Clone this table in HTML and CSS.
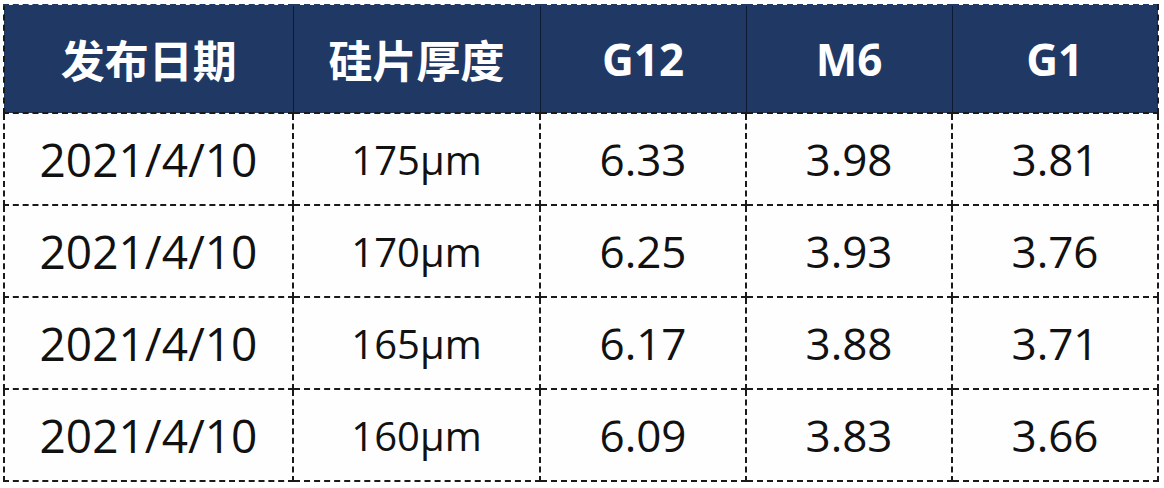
FILE: index.html
```html
<!DOCTYPE html>
<html lang="zh">
<head>
<meta charset="utf-8">
<link rel="stylesheet" href="styles.css">
</head>
<body>
<table class="price">
  <colgroup>
    <col class="c1"><col class="c2"><col class="c3"><col class="c4"><col class="c5">
  </colgroup>
  <thead>
    <tr><th>发布日期</th><th>硅片厚度</th><th>G12</th><th>M6</th><th>G1</th></tr>
  </thead>
  <tbody>
    <tr><td class="date">2021/4/10</td><td class="thick">175μm</td><td>6.33</td><td>3.98</td><td>3.81</td></tr>
    <tr><td class="date">2021/4/10</td><td class="thick">170μm</td><td>6.25</td><td>3.93</td><td>3.76</td></tr>
    <tr><td class="date">2021/4/10</td><td class="thick">165μm</td><td>6.17</td><td>3.88</td><td>3.71</td></tr>
    <tr><td class="date">2021/4/10</td><td class="thick">160μm</td><td>6.09</td><td>3.83</td><td>3.66</td></tr>
  </tbody>
</table>
</body>
</html>
```
FILE: styles.css
```css
html, body {
  margin: 0;
  background: #ffffff;
}
body {
  padding: 4px 0 0 3px;
}
.price {
  border-collapse: collapse;
  table-layout: fixed;
  width: 1154px;
  font-family: "Open Sans", "Noto Sans CJK SC", sans-serif;
  color: #111;
}
.c1 { width: 289px; }
.c2 { width: 247px; }
.c3 { width: 206px; }
.c4 { width: 206px; }
.c5 { width: 206px; }
.price th {
  height: 106px;
  padding: 0;
  background: #1f3864;
  color: #fff;
  font-family: "Open Sans", "Noto Sans CJK SC", sans-serif;
  font-weight: 700;
  font-size: 44px;
  text-align: center;
  border: 2px dashed #1a1a1a;
  border-top: 2px dashed #1f3864;
  border-left: 1px solid #0d1a33;
  border-right: 1px solid #0d1a33;
}
.price th:first-child { border-left: 2px dashed #1a1a1a; }
.price th:last-child { border-right: 2px dashed #1a1a1a; }
.price td {
  height: 90px;
  padding: 0;
  text-align: center;
  font-size: 44px;
  border: 2px dashed #1a1a1a;
  background: #fefefe;
}
.price td.date {
  font-size: 46px;
}
.price td.thick {
  font-size: 40px;
}
```
